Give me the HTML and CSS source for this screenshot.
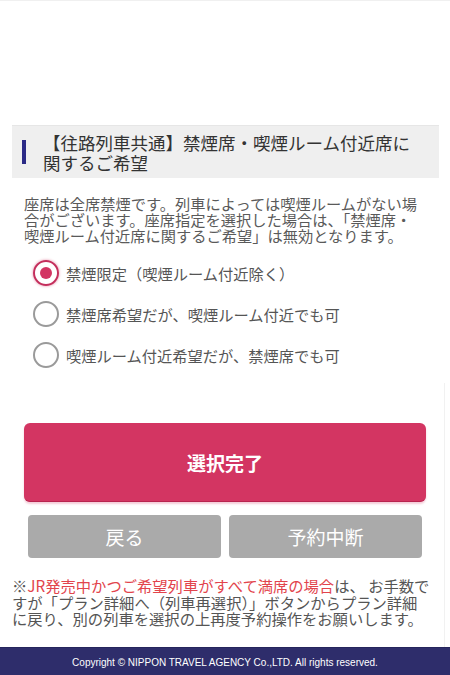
FILE: index.html
```html
<!DOCTYPE html>
<html lang="ja">
<head>
    <meta charset="UTF-8">
    <meta name="viewport" content="width=device-width, initial-scale=1.0">
    <title>禁煙席・喫煙ルーム付近席に関するご希望</title>
    <link rel="stylesheet" href="styles.css">
</head>
<body>
    <div class="page">
        <div class="sectionHeader">
            <span class="headerBar"></span>
            <h2>【往路列車共通】禁煙席・喫煙ルーム付近席に関するご希望</h2>
        </div>

        <p class="lead">座席は全席禁煙です。列車によっては喫煙ルームがない場合がございます。座席指定を選択した場合は、「禁煙席・喫煙ルーム付近席に関するご希望」は無効となります。</p>

        <div class="radioList">
            <label class="radioRow">
                <input type="radio" name="smoking" checked>
                <span>禁煙限定（喫煙ルーム付近除く）</span>
            </label>
            <label class="radioRow">
                <input type="radio" name="smoking">
                <span>禁煙席希望だが、喫煙ルーム付近でも可</span>
            </label>
            <label class="radioRow">
                <input type="radio" name="smoking">
                <span>喫煙ルーム付近希望だが、禁煙席でも可</span>
            </label>
        </div>

        <div class="actions">
            <button class="btnPrimary">選択完了</button>
            <div class="subButtons">
                <button class="btnSub">戻る</button>
                <button class="btnSub">予約中断</button>
            </div>
            <p class="note">※<span class="noteRed">JR発売中かつご希望列車がすべて満席の場合</span>は、 お手数ですが「プラン詳細へ（列車再選択）」ボタンからプラン詳細に戻り、別の列車を選択の上再度予約操作をお願いします。</p>
        </div>
    </div>

    <div class="footer">Copyright © NIPPON TRAVEL AGENCY Co.,LTD. All rights reserved.</div>
</body>
</html>
```

FILE: styles.css
```css
body {
    margin: 0;
    font-family: "Noto Sans CJK JP", "Noto Sans", sans-serif;
    background-color: #fff;
    color: #555;
}

.page {
    border-top: 1px solid #f0f0f0;
    padding-top: 124px;
}

.sectionHeader {
    display: flex;
    margin: 0 11px 0 12px;
    padding: 7px 0 5px 10px;
    background-color: #efefef;
    border-top: 1px solid #e6e6e6;
}

.headerBar {
    flex: none;
    width: 4px;
    height: 24px;
    margin-top: 7px;
    background-color: #2b2a86;
}

.sectionHeader h2 {
    width: 378px;
    margin: 0 0 0 17px;
    font-size: 17.5px;
    font-weight: normal;
    line-height: 20px;
    color: #333;
}

.lead {
    margin: 17px 24px 0 24px;
    font-size: 15.25px;
    line-height: 16px;
    color: #5a5a5a;
}

.radioList {
    margin-top: 9px;
}

.radioRow {
    display: flex;
    align-items: center;
    height: 41px;
    padding-left: 33px;
    font-size: 15.25px;
    color: #555;
}

.radioRow input {
    appearance: none;
    -webkit-appearance: none;
    flex: none;
    width: 26px;
    height: 26px;
    margin: 0 7px 0 0;
    border: 2px solid #9a9a9a;
    border-radius: 50%;
    box-sizing: border-box;
    display: flex;
    align-items: center;
    justify-content: center;
}

.radioRow input:checked {
    border-color: #c42e5c;
    box-shadow: 0 0 2px 1px rgba(210, 52, 98, 0.25);
}

.radioRow input:checked::after {
    content: "";
    width: 12px;
    height: 12px;
    border-radius: 50%;
    background-color: #d23462;
}

.actions {
    margin-top: 8px;
    margin-right: 5px;
    padding-top: 40px;
    padding-bottom: 20px;
    border-right: 1px solid #f1f1f1;
}

.btnPrimary {
    display: block;
    width: 402px;
    height: 79px;
    margin: 0 0 0 24px;
    border: none;
    border-bottom: 1px solid #b8244f;
    border-radius: 6px;
    background-color: #d33562;
    box-shadow: 0 2px 2px rgba(210, 52, 98, 0.25);
    color: #fff;
    font-family: inherit;
    font-size: 19px;
    font-weight: bold;
    cursor: pointer;
}

.subButtons {
    display: flex;
    gap: 8px;
    margin: 13px 0 0 28px;
}

.btnSub {
    width: 193px;
    height: 43px;
    border: none;
    border-radius: 4px;
    background-color: #aaaaaa;
    color: #fff;
    font-family: inherit;
    font-size: 19px;
    cursor: pointer;
}

.note {
    margin: 19px 0 0 12px;
    width: 420px;
    font-size: 15.3px;
    line-height: 16.5px;
}

.noteRed {
    color: #e2444c;
}

.footer {
    height: 29px;
    line-height: 30px;
    background-color: #2e2d6b;
    border-top: 1px solid #26255c;
    color: #fff;
    text-align: center;
    font-family: "Liberation Sans", Arial, sans-serif;
    font-size: 10px;
}
```
